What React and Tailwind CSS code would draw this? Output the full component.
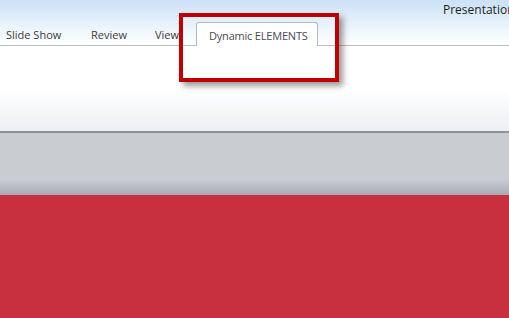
const tabs = [
  { label: 'Slide Show', cls: 'pl-[6px] w-[91px]' },
  { label: 'Review', cls: 'w-[64px]' },
  { label: 'View', cls: 'w-[41px]' },
];

export default function App() {
  return (
    <div className="relative w-[509px] h-[318px] overflow-hidden flex flex-col font-['Open_Sans',sans-serif]">
      {/* title + tab strip */}
      <div className="h-[46px] flex flex-col bg-gradient-to-b from-[#cbe1f6] via-[#e6f1fb] to-white border-b border-[#b9bec6]">
        <div className="h-[22px] pl-[443px] pt-[3px] text-[12px] leading-[14px] text-[#1e1e1e] whitespace-nowrap">Presentation1 - Microsoft PowerPoint</div>
        <div className="flex-1 flex items-end">
          {tabs.map((t) => (
            <div key={t.label} className={`${t.cls} h-[23px] pt-[3px] flex items-center text-[11px] text-[#3c3c3c] whitespace-nowrap`}>
              {t.label}
            </div>
          ))}
          <div className="w-[122px] h-[24px] -mb-px pt-[3px] bg-white border border-b-0 border-[#b4b9c1] rounded-t-[3px] flex items-center pl-[12px] text-[11px] tracking-[-0.2px] text-[#4a4b55] whitespace-nowrap">
            Dynamic ELEMENTS
          </div>
        </div>
      </div>

      {/* ribbon body */}
      <div className="h-[87px] bg-gradient-to-b from-white from-50% to-[#edeff2] border-b-2 border-[#8c929b]" />

      {/* gray workspace */}
      <div className="h-[62px] bg-gradient-to-b from-[#c9ccd1] from-75% to-[#a8acb2]" />

      {/* slide */}
      <div className="flex-1 bg-[#c8303f]" />

      {/* highlight */}
      <div className="absolute left-[179px] top-[13px] w-[160px] h-[69px] border-4 border-[#c00000] shadow-[4px_4px_6px_rgba(0,0,0,0.4)]" />
    </div>
  );
}
